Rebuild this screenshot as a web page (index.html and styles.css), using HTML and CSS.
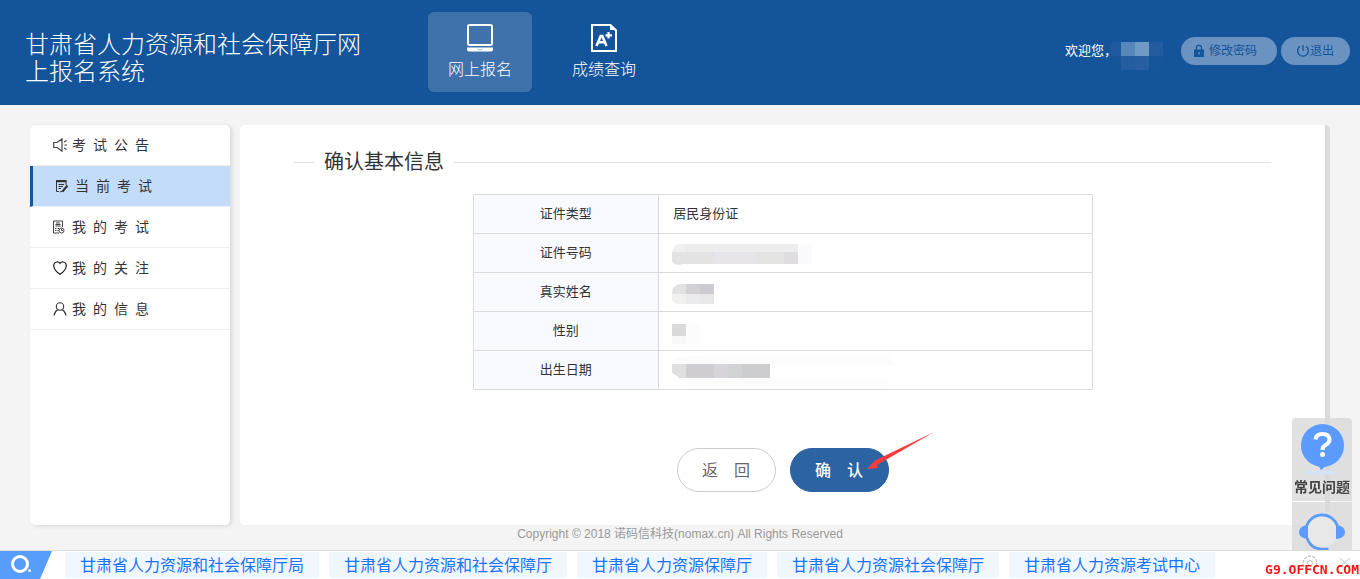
FILE: index.html
```html
<!DOCTYPE html>
<html lang="zh-CN">
<head>
<meta charset="utf-8">
<title>甘肃省人力资源和社会保障厅网上报名系统</title>
<link rel="stylesheet" href="styles.css">
</head>
<body>
<header class="header">
  <h1 class="brand">甘肃省人力资源和社会保障厅网上报名系统</h1>
  <nav class="topnav">
    <a class="topnav-item active" href="#">
      <svg width="28" height="30" viewBox="0 0 28 30" fill="none" stroke="#fff" stroke-width="2"><rect x="2" y="2" width="24" height="20" rx="1.5"/><path d="M1 24.500h26v2q0 2-2 2H3q-2 0-2-2z" fill="#fff" stroke="none"/><path d="M11.500 26q2.500 2 5 0" stroke="#9db7d6" stroke-width="1"/></svg>
      <span>网上报名</span>
    </a>
    <a class="topnav-item" href="#">
      <svg width="28" height="30" viewBox="0 0 28 30" fill="none" stroke="#fff" stroke-width="2"><path d="M2 2h18.500l5.500 5.500V28H2z"/><path d="M20 1v6h7z" fill="#fff" stroke="none"/><path d="M6.500 23L10.700 13h1.600L16.500 23M8.500 19.300h6" stroke-width="2.600"/><path d="M18.500 9v6.500M15.500 12.300h6.500" stroke-width="2.200"/></svg>
      <span>成绩查询</span>
    </a>
  </nav>
  <div class="account">
    <span class="welcome">欢迎您，</span>
    <svg class="user-mask" width="54" height="28" viewBox="0 0 54 28"><path d="M5 0h7v14H0q0-10 5-14z" fill="#205a9e"/><path d="M12 0h14v14H12z" fill="#5888bb"/><path d="M26 0h14v14H26z" fill="#6f9ac6"/><path d="M40 0h14v14H40z" fill="#225b9e"/><path d="M12 14h14v14H12z" fill="#245ea0"/><path d="M26 14h14v14H26z" fill="#285fa3"/><path d="M40 14h14v14H40zM0 14h12v13Q3 26 0 14z" fill="#17559b"/></svg>
    <button class="pill pill-wide" type="button"><svg width="12" height="14" viewBox="0 0 12 14"><path d="M3.500 6V3.800a2.500 2.500 0 0 1 5 0V6" fill="none" stroke="#14549a" stroke-width="1.300"/><path fill="#14549a" fill-rule="evenodd" d="M1 5.500h10v7.500H1zM5.300 8v2.500h1.400V8z"/></svg><span class="pill-gap">修改密码</span></button>
    <button class="pill" type="button"><svg width="14" height="14" viewBox="0 0 14 14" fill="none" stroke="#14549a" stroke-width="1.300"><path d="M7 1v6M4 2.300a5.400 5.400 0 1 0 6 0"/></svg><span>退出</span></button>
  </div>
</header>

<main class="main">
  <nav class="sidebar">
    <a href="#"><svg width="14" height="14" viewBox="0 0 14 14" fill="none" stroke="#444" stroke-width="1.200"><path d="M.700 4.500h3.300L9 .900v12.200L4 9.500H.700zM11 4l2.500-1.500M11.500 7H14M11 10l2.500 1.500"/></svg><span>考&ensp;试&ensp;公&ensp;告</span></a>
    <a class="current" href="#"><svg width="14" height="14" viewBox="0 0 14 14" fill="none" stroke="#333"><path d="M10 6V1.500H.500v11H3M2.500 5.500H8M2.500 7.500H7M2.500 9.500H5M4 13l3-1"/><path d="M.500 2.300h10" stroke-width="2"/><path d="M6.500 12.500l5-6" stroke-width="2"/></svg><span>当&ensp;前&ensp;考&ensp;试</span></a>
    <a href="#"><svg width="14" height="14" viewBox="0 0 14 14" fill="none" stroke="#444"><path d="M9.500 7V1H.500v12H6M2.500 4.500h5M2.500 6h5M2 8.500h1.500M2 10.500h1.500M4.500 8.500H6M4.500 10.500H6M3 3h4"/><circle cx="8.500" cy="10.500" r="2.500"/><path d="M8.500 9v1.500H10"/></svg><span>我&ensp;的&ensp;考&ensp;试</span></a>
    <a href="#"><svg width="14" height="14" viewBox="0 0 14 14" fill="none" stroke="#222" stroke-width="1.200"><path d="M7 2.400C5.500.300 1.900.400.900 3.300 0 7 3 10.500 7 13.300 11 10.500 14 7 13.100 3.300 12.100.400 8.500.300 7 2.400z"/></svg><span>我&ensp;的&ensp;关&ensp;注</span></a>
    <a href="#"><svg width="14" height="14" viewBox="0 0 14 14" fill="none" stroke="#333" stroke-width="1.100"><circle cx="7" cy="4.500" r="3.700"/><path d="M1 13.500Q1.500 9.500 4.800 7.700M13 13.500Q12.500 9.500 9.200 7.700"/></svg><span>我&ensp;的&ensp;信&ensp;息</span></a>
  </nav>

  <section class="panel">
    <h2 class="panel-title">确认基本信息</h2>
    <table class="info">
      <tr><th scope="row">证件类型</th><td>居民身份证</td></tr>
      <tr><th scope="row">证件号码</th><td><svg width="200" height="28" viewBox="0 0 200 28"><path d="M126 5h14v20h-14z" fill="#fafafc"/><path d="M7 5h7v8H0q1-7 7-8z" fill="#f0f0ef"/><path d="M14 5h112v8H14z" fill="#ededee"/><path d="M0 13h42v12H10q-2 2-7 0-3-1-3-4z" fill="#e3e3e3"/><path d="M42 13h42v12H42z" fill="#e7e5e9"/><path d="M84 13h28v12H84z" fill="#e4e4e3"/><path d="M112 13h14v12h-14z" fill="#dfdde0"/></svg></td></tr>
      <tr><th scope="row">真实姓名</th><td><svg width="200" height="28" viewBox="0 0 200 28"><path d="M7 6h7v10H0q0-8 7-10z" fill="#e2e2e2"/><path d="M14 6h14v10H14z" fill="#d3d1d4"/><path d="M28 6h14v10H28z" fill="#cdcbcf"/><path d="M0 16h14v10H6q-6-1-6-6z" fill="#f1f1f0"/><path d="M14 16h14v10H14z" fill="#ebebef"/><path d="M28 16h14v10H28z" fill="#e8e8e8"/></svg></td></tr>
      <tr><th scope="row">性别</th><td><svg width="200" height="28" viewBox="0 0 200 28"><path d="M0 7h28v20H0z" fill="#fcfcfc"/><path d="M0 7h14v12H0z" fill="#dadada"/><path d="M0 19h14v8H0z" fill="#f8f8f8"/></svg></td></tr>
      <tr><th scope="row">出生日期</th><td><svg width="224" height="32" viewBox="0 0 224 32"><path d="M6 3q30-2 50-2h154q10 1 12 10H0q0-6 6-8zM14 25h204q-2 8-18 6H22q-8 0-8-6z" fill="#fbfbfb"/><path d="M0 10h14v14H7q-2-3-7-5z" fill="#dfdfdf"/><path d="M14 10h28v14H14z" fill="#d1ced3"/><path d="M42 10h14v14H42z" fill="#d7d4da"/><path d="M56 10h14v14H56z" fill="#d0d3d1"/><path d="M70 10h28v14H70z" fill="#cdcdcf"/></svg></td></tr>
    </table>
    <div class="actions">
      <button class="btn" type="button">返&emsp;回</button>
      <button class="btn primary" type="button">确&emsp;认</button>
      <svg class="arrow" width="68" height="40" viewBox="0 0 68 40"><path d="M67 0L8 28.500 0 37l11-1-1-3z" fill="#fb3b3b"/></svg>
    </div>
  </section>
</main>

<footer class="copyright">Copyright © 2018 诺码信科技(nomax.cn) All Rights Reserved</footer>

<aside class="helper">
  <a class="helper-item" href="#">
    <svg width="48" height="54" viewBox="0 0 48 54"><ellipse cx="24" cy="49.500" rx="17" ry="2" fill="#d4e3f7"/><circle cx="26.500" cy="23" r="21" fill="#cfe0fa"/><circle cx="24.500" cy="22.500" r="21.500" fill="#5b9bff"/><path d="M20 42l3 5 6-5z" fill="#5b9bff"/><path d="M17.500 16.500q.500-5.500 7-5.500t7 5.500q0 3.500-4 5.500-3 1.500-3 5" fill="none" stroke="#fff" stroke-width="4"/><circle cx="24.500" cy="31.500" r="2.500" fill="#fff"/></svg>
    <span>常见问题</span>
  </a>
  <a class="helper-item" href="#" aria-label="在线客服">
    <svg width="48" height="38" viewBox="0 0 48 38"><circle cx="24" cy="19.500" r="16" fill="#e8e8e8"/><path d="M8.500 14a16.500 17 0 0 1 31 0M8.500 25q4 12 15 12h7" fill="none" stroke="#5b9bff" stroke-width="2.600"/><path d="M10 13v14q-9-1-9-7t9-7zM38 13v14q9-1 9-7t-9-7z" fill="#5b9bff"/></svg>
  </a>
</aside>

<div class="linkbar">
  <svg class="search" width="52" height="28" viewBox="0 0 52 28"><path d="M0 0h52L40 28H0z" fill="#579dfc"/><circle cx="20" cy="13" r="7.500" fill="none" stroke="#fff" stroke-width="3"/><circle cx="29.500" cy="19.500" r="1.500" fill="#fff"/></svg>
  <nav class="links">
    <a href="#">甘肃省人力资源和社会保障厅局</a>
    <a href="#">甘肃省人力资源和社会保障厅</a>
    <a href="#">甘肃省人力资源保障厅</a>
    <a href="#">甘肃省人力资源社会保障厅</a>
    <a href="#">甘肃省人力资源考试中心</a>
  </nav>
  <svg class="tools" width="50" height="22" viewBox="0 0 50 22" fill="none" stroke="#c4c4c4"><circle cx="8" cy="9" r="2.500"/><circle cx="8" cy="9" r="7" stroke-width="1.300" stroke-dasharray="3 1.400"/><path d="M38 4l10 9M48 4l-10 9"/></svg>
  <span class="mark">G9.OFFCN.COM</span>
</div>
</body>
</html>
```

FILE: styles.css
```css
* { box-sizing: border-box; }

body {
  margin: 0;
  min-height: 100vh;
  background: #f4f4f4;
  color: #333;
  font: 13px/20px "Liberation Sans", "Noto Sans CJK SC", sans-serif;
}

a { color: inherit; text-decoration: none; }
svg { display: block; flex: none; }
button { font: inherit; cursor: pointer; }

.header {
  display: flex;
  align-items: center;
  padding: 12px 10px 13px 25px;
  background: #14549a;
  color: #fff;
}

.brand {
  width: 340px;
  margin: 12px 63px 0 0;
  font-size: 24px;
  font-weight: 300;
  line-height: 27px;
}

.topnav { display: flex; gap: 20px; }

.topnav-item {
  display: flex;
  flex-direction: column;
  align-items: center;
  gap: 7px;
  width: 104px;
  height: 80px;
  padding-top: 11px;
  border-radius: 6px;
  font-size: 16px;
  font-weight: 300;
}

.topnav-item.active { background: #3f71aa; }

.account {
  display: flex;
  align-items: center;
  margin: 0 0 2px auto;
}

.user-mask { margin: 9px 18px 0 -8px; }

.pill {
  display: flex;
  align-items: center;
  height: 28px;
  padding: 0 16px 0 15px;
  border: 0;
  border-radius: 14px;
  background: #6a93c2;
  color: #14549a;
  font-size: 12px;
}

.pill-wide { padding: 0 20px 0 12px; margin-right: 4px; }
.pill-gap { margin-left: 4px; }

.main {
  display: flex;
  gap: 10px;
  min-height: 400px;
  margin: 20px 30px 0;
}

.sidebar {
  flex: 0 0 200px;
  overflow: hidden;
  border-radius: 5px;
  background: #fff;
  box-shadow: 2px 1px 4px #d8d8d8;
}

.sidebar a {
  display: flex;
  align-items: center;
  height: 41px;
  padding-left: 23px;
  border-bottom: 1px solid #f0f0f0;
  font-size: 14px;
}

.sidebar svg { margin-right: 5px; }

.sidebar .current {
  border-left: 3px solid #14549a;
  background: #c2dcf9;
}

.panel {
  flex: 1;
  position: relative;
  margin-right: 5px;
  padding: 24px 54px 33px;
  border-radius: 5px 0 0 5px;
  background: #fff;
}

.panel::after {
  content: "";
  position: absolute;
  top: 0;
  bottom: 14px;
  left: 100%;
  width: 5px;
  border-top-right-radius: 5px;
  background: #dbdbdb;
}

.panel-title {
  display: flex;
  align-items: center;
  gap: 10px;
  margin: 0 0 18px;
  font-size: 20px;
  font-weight: 400;
  line-height: 27px;
}

.panel-title::before,
.panel-title::after {
  content: "";
  width: 20px;
  height: 1px;
  background: #e0e0e0;
}

.panel-title::after { flex: 1; }

.info {
  width: 620px;
  margin: 0 auto;
  border-collapse: collapse;
}

.info th,
.info td {
  height: 39px;
  padding: 0 14px;
  border: 1px solid #dbdbdb;
  font-weight: 400;
  text-align: left;
}

.info th {
  width: 30%;
  background: #f9faff;
  text-align: center;
}

.info td svg { margin-left: -1px; }

.actions {
  display: flex;
  justify-content: center;
  gap: 14px;
  position: relative;
  width: 212px;
  margin: 58px auto 0;
}

.btn {
  flex: 1;
  height: 44px;
  padding: 2px 0 0;
  border: 1px solid #ccc;
  border-radius: 22px;
  background: #fff;
  color: #666;
  font-size: 16px;
}

.btn.primary {
  border-color: #2b63a3;
  background: #2b63a3;
  color: #fff;
  font-weight: 500;
}

.arrow {
  position: absolute;
  top: -16px;
  left: 190px;
}

.copyright {
  color: #999;
  font-size: 12px;
  line-height: 18px;
  text-align: center;
}

.helper {
  position: fixed;
  right: 8px;
  bottom: 29px;
  display: flex;
  flex-direction: column;
  gap: 1px;
  width: 60px;
}

.helper-item {
  display: flex;
  flex-direction: column;
  align-items: center;
  height: 83px;
  padding-top: 5px;
  border-radius: 4px 4px 0 0;
  background: rgba(218, 218, 218, 0.8);
  color: #444;
  font-size: 14px;
  font-weight: 700;
}

.helper-item + .helper-item {
  height: 48px;
  padding-top: 10px;
  border-radius: 0;
  overflow: hidden;
}

.linkbar {
  position: fixed;
  right: 0;
  bottom: 0;
  left: 0;
  display: flex;
  align-items: center;
  height: 29px;
  border-top: 1px solid #ddd;
  background: #fff;
}

.links { display: flex; gap: 10px; margin-left: 13px; }

.links a {
  padding: 2px 15px 0;
  border-radius: 2px;
  background: #f0f7ff;
  color: #1a73ff;
  font-size: 16px;
  line-height: 24px;
  white-space: nowrap;
}

.tools { position: absolute; right: 8px; top: 3px; }

.mark {
  position: absolute;
  right: 1px;
  bottom: 0;
  color: #fb1414;
  font: 700 13px/18px "DejaVu Sans Mono", monospace;
}
```
